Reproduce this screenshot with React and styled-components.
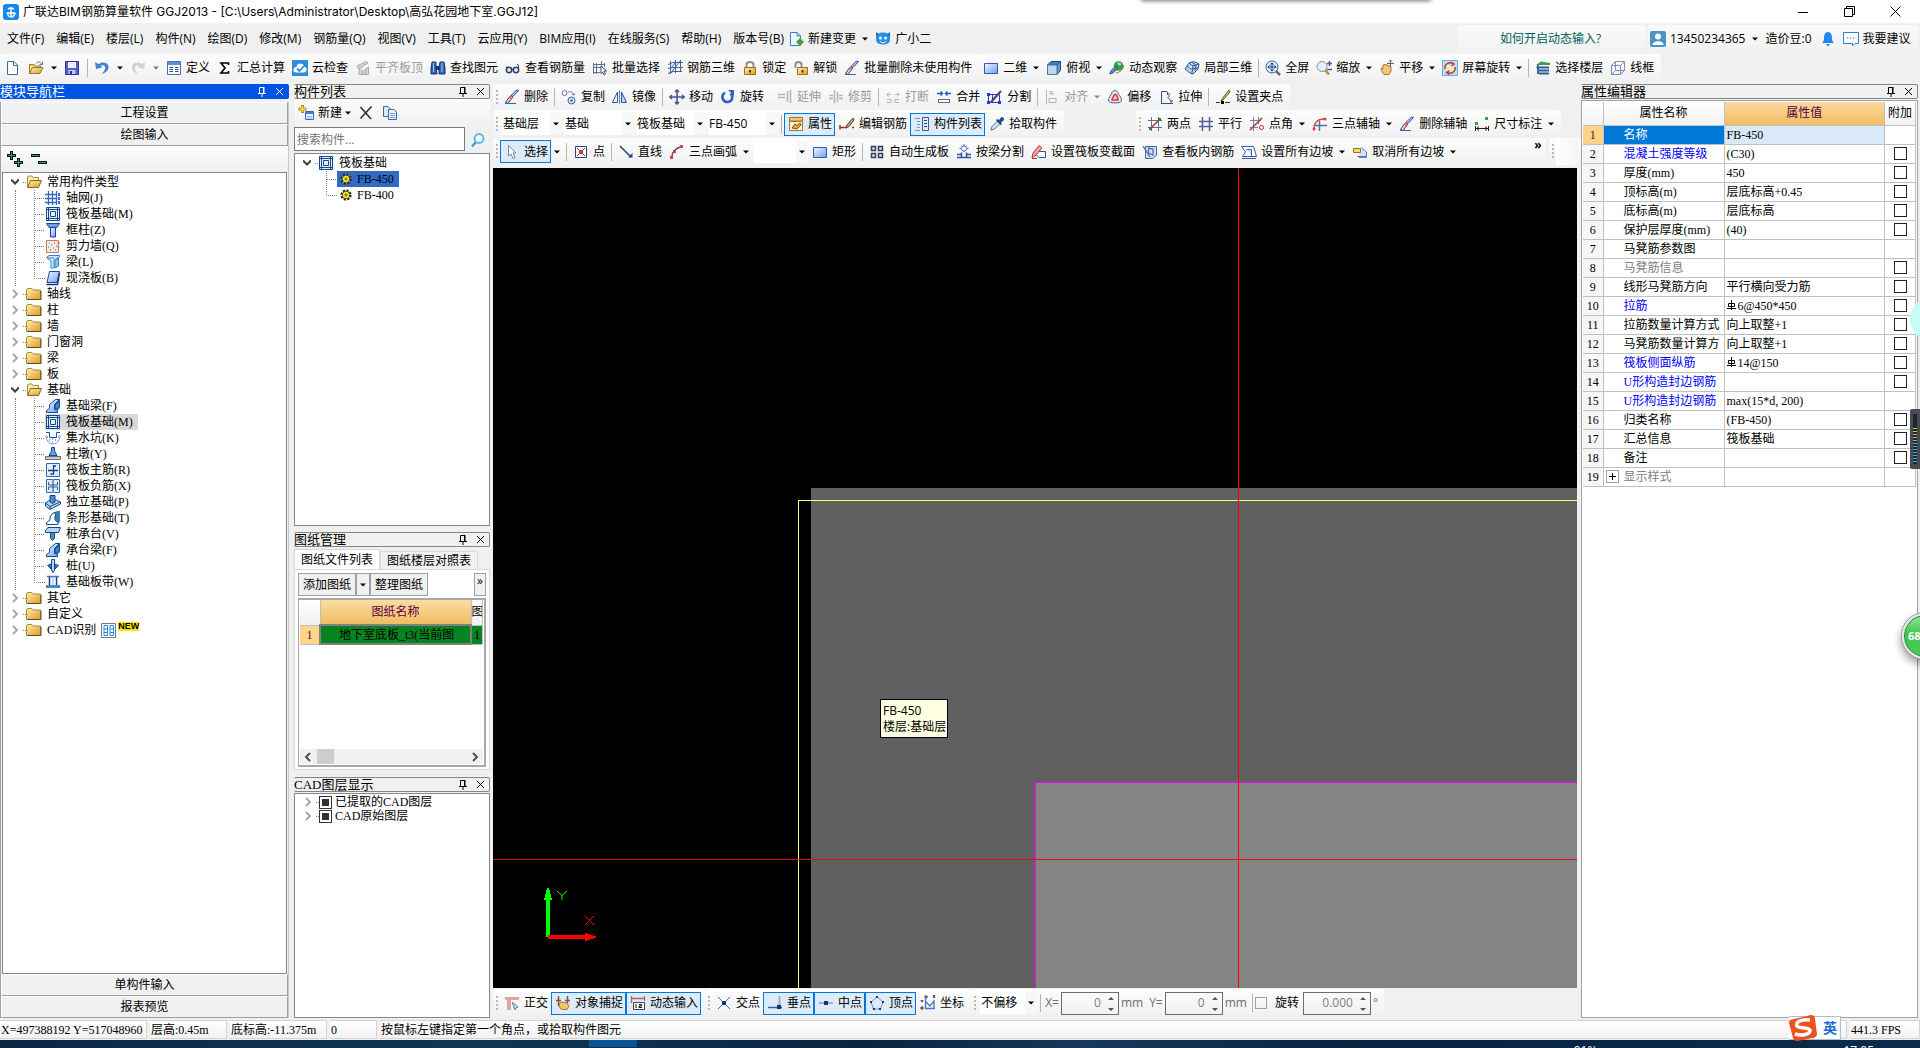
import React from "react";
import styled, { createGlobalStyle } from "styled-components";

const UI = `"Open Sans", "Noto Sans CJK SC", sans-serif`;
const SONG = `"Liberation Serif", "Noto Sans CJK SC", serif`;

const GlobalStyle = createGlobalStyle`
  * {
    box-sizing: border-box;
  }
  body {
    margin: 0;
    background: #f0f0f0;
    font: 12px/16px ${UI};
    color: #000;
    overflow: hidden;
  }
  button, input, select {
    font: inherit;
    color: inherit;
    margin: 0;
    padding: 0;
    border: 0;
    background: none;
    border-radius: 0;
    outline: 0;
  }
  svg {
    display: block;
    flex: none;
  }
`;

/* ---------- icons ---------- */

const P = ({ d, c = "#24479b", f = "none", w = 1 }) => (
  <path d={d} stroke={c} fill={f} strokeWidth={w} />
);

const brush = (
  <>
    <P d="M14.5 1.5L9 7.5L7 6.5L12.5 1z" c="#24479b" f="#b9d0f5" />
    <P d="M9 8L7 10.500L5 8.500L7 6.500z" c="#b03040" f="#e08a8a" />
    <P d="M5 8.500L1.500 13.500L4 14.500L7 10.500" c="#33415e" f="#cfd8ea" />
    <P d="M1 14.500H12" c="#4a5f95" />
  </>
);

const raft = (
  <>
    <rect x="1" y="1" width="14" height="14" fill="#e6f0fb" />
    <P d="M1.500 1.500H14.500V14.500H1.500zM5.500 5.500H10.500V10.500H5.500z" c="#12488f" />
    <P d="M3.500 1V15M12.500 1V15M1 3.500H15M1 12.500H15" c="#12488f" />
  </>
);

const beam = (
  <>
    <path d="M6 6L11 1H15V10L10 15V6z" fill="#3f7fc4" />
    <P d="M1.500 14.500V12.500L4.500 10.500V6.500L10.500 1.500H14.500L9.500 6.500V11L12.500 12.500V14.500z" c="#0c4a8c" f="url(#blue)" />
    <P d="M10 7L14.500 2.500V9L10 12z" c="#0c4a8c" f="#3c82cc" />
  </>
);

const ICONS = {
  logo: (
    <>
      <rect width="16" height="16" rx="3" fill="#1589e8" />
      <P d="M8 3V13M3.500 9H12.500M5 5.500C6 3.500 10 3.500 11 5.500M4.500 9C5 12 7 13 8 13C10 13 11.500 11 12 9" c="#fff" w="1.5" />
    </>
  ),
  newFile: <P d="M3.500 1.500H10L13.500 5V14.500H3.500zM9.500 1.500V5.500H13.500" c="#3f6c96" f="#fbfdff" />,
  open: (
    <>
      <P d="M1.500 13.500V4.500H6L7 6H12.500V8" c="#9a7a2c" f="#f6d77d" />
      <P d="M1.500 13.500L4.500 7.500H15L12 13.500z" c="#a07820" f="url(#gold)" />
      <P d="M8 3.500C10 1 12 1.500 13.500 4M14.500 1.500V4.500H11.500" c="#4a79bd" />
    </>
  ),
  save: (
    <>
      <P d="M1.500 1.500H14.500V14.500H1.500z" c="#31318c" f="#5660cf" />
      <path d="M4 2H12V8H4z" fill="#eef0ff" />
      <path d="M4.500 10H11.500V14H4.500z" fill="#c5c8e8" />
      <path d="M6 11H8V14H6z" fill="#31318c" />
    </>
  ),
  undo: <path d="M1 2L2 9L8.500 7.500L6.500 6C9 4 12 6 11 9C10.500 11 9 12 8 14C12 12.500 15 10 14.500 6.500C14 2.500 8.500 1 4.500 4z" fill="#4a7fd6" />,
  redo: <path d="M15 2L14 9L8 7.500L10 6C7 4.500 4.500 6 5 9C5.300 11 6.500 12 8 14C4 12.500 1.500 10 2 6.500C2.500 2.500 8 1 12 4z" fill="#d0d0d0" />,
  define: (
    <>
      <P d="M1.500 1.500H14.500V14.500H1.500z" c="#4f6fae" f="#f4f8ff" />
      <path d="M2 2H14V5H2z" fill="#5f8bd8" />
      <P d="M3.500 7.500H7M3.500 9.500H7M3.500 11.500H7M9 7.500H12.500M9 9.500H12.500M9 11.500H12.500" c="#35508a" />
    </>
  ),
  sum: <P d="M11.500 5V3H4L8 8L4 13H11.500V11" c="#000" w="1.600" />,
  cloudCheck: (
    <>
      <rect width="16" height="16" fill="#2d8fdc" />
      <path d="M4.500 12.500C0 12.500 1 7 4.500 7C5 2.500 11.500 2.500 12 6.500C15.500 7 15.500 12.500 11.500 12.500z" fill="#fff" />
      <P d="M5 8.500L7.500 11L12 6" c="#2d8fdc" w="1.800" />
    </>
  ),
  alignTop: <P d="M2 6L11 1.500L13 3L4 9zM4 9V14.500H13.500V7L9 10M7.500 14V11M10.500 14V10" c="#a9a9a9" f="#d2d2d2" />,
  find: (
    <>
      <path d="M2 2H6V7L7 14H1V8zM10 2H14L15 8V14H9V7z" fill="#2f65b0" stroke="#123a7c" />
      <path d="M6 6H10V10H6z" fill="#123a7c" />
      <P d="M3.500 3V12M12 3V12" c="#a6c8f2" />
    </>
  ),
  glasses: (
    <>
      <circle cx="4" cy="10" r="2.700" fill="#dfe9f5" stroke="#2f3f66" strokeWidth="1.500" />
      <circle cx="11" cy="10" r="2.700" fill="#dfe9f5" stroke="#2f3f66" strokeWidth="1.500" />
      <P d="M6.500 9.500H8.500M13.500 9V5L12 4M1.500 9V6.500" c="#2f3f66" />
    </>
  ),
  batch: (
    <>
      <P d="M1.500 3V14M4.500 3V14M1 4.500H12M1 7.500H9M1 12.500H8M9.500 1V9M12.500 3V7" c="#5f6f98" />
      <P d="M9 6L14.500 11H12L13.500 14L12 15L10.500 12L9 13.500z" c="#3d4660" f="#fff" />
    </>
  ),
  rebar3d: <P d="M3.500 1V14M8.500 0V13M13.500 0V12M1 4.500L6 2.500H16M1 8.500L6 7.500H16M1 13.500L6 11.500H15M3 14L13 1M3 9L8 3" c="#42619f" />,
  lock: (
    <>
      <P d="M4.500 8V4.500C4.500 1 11.500 1 11.500 4.500V8" c="#8f8f8f" w="2" />
      <P d="M2.500 7.500H13.500V14.500H2.500z" c="#a06f14" f="url(#gold)" />
      <P d="M8 10V12.500" c="#4d3200" w="2" />
    </>
  ),
  unlock: (
    <>
      <P d="M2.500 8V4.500C2.500 1 8.500 1 8.500 4.500V7" c="#8f8f8f" w="2" />
      <P d="M4.500 7.500H14.500V14.500H4.500z" c="#a06f14" f="url(#gold)" />
      <P d="M9.500 10V12.500" c="#4d3200" w="2" />
    </>
  ),
  brush,
  rect: <P d="M1.500 3.500H14.500V13.500H1.500z" c="#3057b5" f="url(#blue)" />,
  cube: (
    <>
      <P d="M1.500 5L5 1.500H14.500L11 5z" c="#25507e" f="#3f7fb5" />
      <P d="M11 5L14.500 1.500V10.500L11 14.500z" c="#25507e" f="#5f9dcb" />
      <P d="M1.500 5H11V14.500H1.500z" c="#4f7aa3" f="#b9d7ee" />
    </>
  ),
  orbit: (
    <>
      <circle cx="9.500" cy="6" r="4.800" fill="#2fa24a" />
      <path d="M8 3C10 1.500 13 3 12 5C10.500 6 8.500 5 8 3z" fill="#9fe3a5" />
      <P d="M1 14C1 11 5 7 8 6C9 9 5 13 1 14z" c="#23497e" f="#5d8dc8" />
      <P d="M7 13C11 12.500 14.500 9 14.500 5" c="#b55a2c" />
    </>
  ),
  local3d: <P d="M1 9L5 3L10 1.500L15 4L14 9L9 14L6 13zM5 3L9 6L15 4M9 6L8 13M3 6L7 9L14 8M7 2L12 5L11 11" c="#2d5c96" f="#b6d4ef" />,
  fit: (
    <>
      <P d="M11 11L15 15" c="#6a6a70" w="2.500" />
      <circle cx="7" cy="7" r="6" fill="#dcebfa" stroke="#3f5f94" />
      <P d="M7 3V11M3 7H11M5.500 4.500L7 3L8.500 4.500M5.500 9.500L7 11L8.500 9.500M4.500 5.500L3 7L4.500 8.500M9.500 5.500L11 7L9.500 8.500" c="#17357c" />
    </>
  ),
  zoom: (
    <>
      <P d="M9 10L13 14.500" c="#c08a3a" w="2.500" />
      <circle cx="6" cy="6.500" r="5" fill="#e6f0fa" stroke="#7d8fa8" />
      <P d="M13.500 1V6M11 3.500H16M11 9.500H16" c="#3c5d9a" w="1.500" />
    </>
  ),
  pan: (
    <>
      <P d="M3.500 13L2 8L4 8.500V5L6 4.500L8 5L10 6L12 7V11L10 14.500H5z" c="#a5762a" f="#f1c877" />
      <P d="M11.500 0V7M8 3.500H15M10 1.500L11.500 0L13 1.500" c="#54637e" />
    </>
  ),
  rotateScreen: (
    <>
      <P d="M.5.5H15.500V15.500H.5z" c="#5db0e6" f="#b9e2f7" />
      <path d="M5 6H11V11H5z" fill="#f2f0a8" />
      <P d="M3 9C2 4 7 1.500 11 3.500M13 7C14 12 9 14.500 5 12.500M9 2L12 4L9.500 6M7.500 10.500L4.500 12.500L7 14.500" c="#d6352c" w="1.500" />
    </>
  ),
  floors: (
    <>
      <path d="M1 5L6 1.500L15 3V5z" fill="#3c9d4d" />
      <P d="M3 5V14M1.500 7.500H14M4 10.500H14M4 13.500H14" c="#2c5b9c" w="1.800" />
    </>
  ),
  wire: <P d="M1.500 5.500H10.500V14.500H1.500zM1.500 5.500L5.500 1.500H14.500L10.500 5.500M14.500 1.500V10.500L10.500 14.500M5.500 1.500V10.500H14.500M5.500 10.500L1.500 14.500" c="#7890ba" />,
  copy: (
    <>
      <circle cx="3.500" cy="4" r="2.500" fill="#fff" stroke="#55719f" />
      <circle cx="10.500" cy="11.500" r="3.500" fill="#dce8f6" stroke="#3b5a92" />
      <circle cx="10.500" cy="11.500" r="1.200" fill="#3b5a92" />
      <P d="M7 3C10 2 12 3 12.500 6M10.500 4.500L12.500 6.500L14 4" c="#7d8aa6" />
    </>
  ),
  mirror: (
    <>
      <P d="M7.500 1V15" c="#6a7ca5" />
      <P d="M5.500 3V13.500H.5z" c="#2854a5" f="#fff" />
      <P d="M9.500 3V13.500H14.500z" c="#2854a5" f="#bcd5f5" />
    </>
  ),
  move: <P d="M8 1V15M1 8H15M6 3L8 1L10 3M6 13L8 15L10 13M3 6L1 8L3 10M13 6L15 8L13 10" c="#3e5b94" w="1.600" />,
  rotate: (
    <>
      <P d="M5 3.500C0 7 3 13.500 8 13C12.500 12.500 13.500 7 10.500 4.500" c="#2f63c0" w="2.600" />
      <path d="M8 1H14V7z" fill="#2f63c0" />
    </>
  ),
  extend: <P d="M1 5.500H8M1 8.500H8M10.500 2V13M13.500 1V14" c="#b4b4b4" w="1.500" />,
  trim: <P d="M6.500 1V14M9.500 3V13M1 6.500H5M1 9.500H5M11 6.500H15M11 9.500H15" c="#b4b4b4" w="1.500" />,
  breakIt: <P d="M2 5.500H6M10 5.500H14M3.500 3.500L2 5.500L3.500 7.500M12.500 3.500L14 5.500L12.500 7.500M2 10.500H6V13.500H2M14 10.500H10V13.500H14" c="#b4b4b4" />,
  join: (
    <>
      <P d="M1 4.500H6M15 4.500H10M4.500 2.500L6.500 4.500L4.500 6.500M11.500 2.500L9.500 4.500L11.500 6.500" c="#2c5cc0" w="1.500" />
      <P d="M2.500 10.500H13.500V13.500H2.500z" c="#54698f" f="#fff" />
    </>
  ),
  split: (
    <>
      <P d="M1.500 5.500H12.500V13.500H1.500zM5.500 5.500V13.500" c="#2238e0" />
      <P d="M4 13L14 2" c="#4d4740" w="2" />
      <path d="M0 4H3V7H0zM0 12H3V15H0zM11 12H14V15H11z" fill="#2238e0" />
    </>
  ),
  align: <P d="M2.500 1V15M5 4.500H10M5 2.500H8V6.500M5 9.500H12V13.500H5z" c="#b4b4b4" />,
  offset: (
    <>
      <P d="M1.500 12C1 8 5 6 5 3.500C6 1 10 1 11 3.500C11 6 15 8 14.500 12C13 14.500 3 14.500 1.500 12z" c="#465f8d" f="#e9eef6" />
      <P d="M5 11C5 9 6.500 8 7 6C8 5 9 5 9.500 6C10 8 11.500 9 11 11z" c="#cf3a3a" f="#f6caca" w="1.500" />
    </>
  ),
  stretch: <P d="M3.500 14.500V2.500H9M3 14.500H15M9.500 3V6M9.500 8L13 12M11 4V8M12 13H14V11" c="#2b5185" />,
  grip: (
    <>
      <P d="M14 1L7 10L6 12L8 11L15 3z" c="#6a5730" f="#d9b46a" />
      <P d="M1 13.500H5M10 13.500H15" c="#333" />
      <path d="M6 12H9V15H6z" />
    </>
  ),
  props: (
    <>
      <P d="M1.500 1.500H14.500V5H1.500z" c="#a8742a" f="#f8c477" />
      <P d="M1.500 5.500H14.500V14.500H1.500z" c="#a8742a" f="#fdf3dc" />
      <P d="M4 12L7 8L9 9.500L12 7L13 9L9 13z" c="#7b5410" f="#dca63c" />
    </>
  ),
  editRebar: (
    <>
      <P d="M14 2L8 9L7 12L10 10.500L15 4z" c="#3d3d3d" f="#cfa860" />
      <P d="M1 11.500H8M13 11.500H15M1 13.500V9" c="#93352b" w="1.500" />
    </>
  ),
  list: (
    <>
      <P d="M1 2.500H6M3 5.500H6M3 8.500H6M3 11.500H6M1 14.500H6" c="#7a8fb8" />
      <P d="M8.500 1.500H14.500V14.500H8.500z" c="#3d5d9a" f="#dce9f8" />
      <P d="M10 4.500H13M10 7.500H13M10 10.500H13" />
    </>
  ),
  picker: (
    <>
      <P d="M2 14L3 10.500L8.500 5L11 7.500L5.500 13z" c="#4d7199" f="#d5e7f7" />
      <path d="M8 3L10 4L12 1.500C14 .5 16 2.500 14.500 4.500L12 6.500L13 8L11.500 9L7 4.500z" fill="#1c4c86" />
    </>
  ),
  twoPoint: (
    <>
      <P d="M4.500 1V15M11.500 1V15M1 4.500H15M1 11.500H15" c="#5d6faf" />
      <P d="M3 13L13 3" c="#a02f20" w="1.500" />
      <path d="M2 11H5V14H2zM11 2H14V5H11z" fill="#2c7f35" />
    </>
  ),
  parallel: <P d="M4.500 1V15M11.500 1V15M1 5.500H15M1 10.500H15" c="#51609f" w="1.500" />,
  angle: (
    <>
      <P d="M4.500 1V15M1 4.500H12M1 11.500H9M9.500 1V8" c="#6f84bb" />
      <P d="M1 14L13 2" c="#b53026" w="1.500" />
      <circle cx="12.500" cy="11.500" r="2" fill="none" stroke="#c22" />
    </>
  ),
  threeAxis: (
    <>
      <P d="M7.500 5V15M2 9.500H15" c="#5a6da8" w="1.500" />
      <P d="M2 13C2 7 5 3 12 3" c="#d4453b" w="1.300" />
      <circle cx="13" cy="3" r="1.500" fill="#d4453b" />
      <circle cx="2" cy="13" r="1.500" fill="#d4453b" />
    </>
  ),
  dim: (
    <>
      <path d="M1 6H4V9H1zM11 1H14V4H11z" fill="#3ba148" />
      <P d="M1.500 10V15M14.500 10V15M2 12.500H14M5 10.500L2.500 12.500L5 14.500M11 10.500L13.500 12.500L11 14.500" c="#222" />
    </>
  ),
  cursor: <P d="M4.500 1.500V12L7 10L9 14.500L11 13.500L9 9H12z" c="#7b8798" f="#fff" />,
  point: (
    <>
      <P d="M2.500 2.500H13.500V13.500H2.500z" c="#2f3f7c" f="#fff" />
      <P d="M4 4L12 12M12 4L4 12" c="#47559a" />
      <path d="M6 6H10V10H6z" fill="#d0393a" />
    </>
  ),
  line: (
    <>
      <P d="M2 2L13 13" c="#24407f" w="1.500" />
      <path d="M10 13.500H14.500V9z" fill="#24407f" />
    </>
  ),
  arc: (
    <>
      <P d="M2.500 14C3 8 6 4 13 2.500" c="#3d5793" w="1.500" />
      <path d="M11 1H14V4H11zM4 6H7V9H4zM1 12H4V15H1z" fill="#cc4b35" />
    </>
  ),
  autoSlab: <P d="M2.500 2.500H6.500V6.500H2.500zM9.500 2.500H13.500V6.500H9.500zM2.500 9.500H6.500V13.500H2.500zM9.500 9.500H13.500V13.500H9.500z" c="#333c5c" f="#d6e2f5" w="1.500" />,
  beamSplit: (
    <>
      <P d="M5.500 8.500V13.500H10.500V8.500M1 13.500H15M1 10.500H5M11 10.500H15" c="#2c57a4" w="1.500" />
      <circle cx="8" cy="4.500" r="2.500" fill="#fff" stroke="#4470b5" />
      <P d="M8 0V2M8 7V8M3.500 4.500H5M11 4.500H12.500M5 1.500L6 2.500M11 1.500L10 2.500" c="#4470b5" />
    </>
  ),
  section: (
    <>
      <P d="M7 7.500H14.500V13.500H8L5 10.500" c="#2f4ca0" f="#fff" />
      <P d="M1 14L2 9L8 1.500L11 4L5 11z" c="#c03a35" f="#f0a09a" />
      <P d="M1 14.500H6" c="#c03a35" />
    </>
  ),
  viewRebar: (
    <>
      <P d="M3.500 2.500H14.500V11L11 14.500H3.500z" c="#47659d" f="#cfe1f4" />
      <P d="M1 2L8 13M6.500 4V9L11 11V5z" c="#5470a4" w="1.300" />
    </>
  ),
  slope: (
    <>
      <P d="M.5 2.500H12.500L15.500 12.500H1.500L4.500 8z" c="#3c5cb3" f="#fff" />
      <P d="M5.500 5.500H10.500V12" c="#3c5cb3" f="#cfe0f8" />
      <P d="M1 14.500H15" c="#3c5cb3" />
    </>
  ),
  unslope: (
    <>
      <P d="M9.500 3.500L14.500 8V13.500H7" c="#5f79bd" f="#cfe0f8" />
      <P d="M1.500 4.500H8.500V8.500H1.500z" c="#8d7a25" f="#f5df68" />
      <P d="M5 12.500H14" c="#5f79bd" />
    </>
  ),
  ortho: (
    <>
      <path d="M1 2H15V5H7V15H3V5H1z" fill="#dfa3a0" />
      <P d="M8 7L14 12L12 13L11 15z" c="#6e83a0" f="#c8d6e6" />
    </>
  ),
  snap: (
    <>
      <P d="M3.500 1V11M12.500 1V8M1 5.500H6M10 5.500H15" c="#8c4a4e" w="1.500" />
      <P d="M5 13L4 9L6 7L12 8L14 11L12 14.500H7z" c="#a67b2c" f="#efc56a" />
    </>
  ),
  dyn: (
    <>
      <P d="M1.500 1V8M14.500 1V6M2 3.500H14" c="#a9696c" w="1.300" />
      <P d="M3.500 7.500H14.500V14.500H3.500z" c="#3d4450" f="#fff" />
      <P d="M6 9V13M9 9.500H11.500V11H9V12.500H12" c="#111" />
    </>
  ),
  cross: (
    <>
      <P d="M2 2L14 14M14 2L2 14" c="#3c6db5" />
      <path d="M6 6H10V10H6z" fill="#12367c" />
    </>
  ),
  perp: (
    <>
      <P d="M12.500 1V12" c="#8fabd6" w="1.800" />
      <P d="M1 12.500H15" c="#2f63b0" w="1.500" />
      <path d="M10 10H14V14H10z" fill="#12367c" />
    </>
  ),
  mid: (
    <>
      <P d="M1 8H15" c="#8fabd6" w="1.800" />
      <path d="M6 6H10V10H6z" fill="#12367c" />
    </>
  ),
  vertex: (
    <>
      <P d="M8 2L14 7L11.500 14H4.500L2 7z" c="#6d95cf" />
      <path d="M7 1H9V3H7zM13 6H15V8H13zM1 6H3V8H1zM4 13H6V15H4zM10 13H12V15H10z" fill="#12367c" />
    </>
  ),
  coord: (
    <>
      <P d="M5.500 4V13.500H15M5 6L10 11L14 6V13" c="#3f78c7" w="1.300" />
      <P d="M1 5L2 7L3 5M13 0L15 3M15 0L13 3M1 12H3V14H1zM5 1H7V3H5z" c="#333" />
    </>
  ),
  change: (
    <>
      <P d="M2.500 1.500H9L12.500 5V14.500H2.500z" c="#3484c4" f="#eef7ff" />
      <P d="M9 1.500V5H12.500" c="#3484c4" />
      <path d="M12 7L16 11L12 15L8 11z" fill="#44a52c" />
    </>
  ),
  robot: (
    <>
      <path d="M1 6C1 0 15 0 15 6V9C15 15 1 15 1 9z" fill="#2492e0" />
      <path d="M4 3L1 1V6zM12 3L15 1V6z" fill="#1575c0" />
      <circle cx="5.500" cy="7" r="1.500" fill="#fff" />
      <circle cx="10.500" cy="7" r="1.500" fill="#fff" />
      <P d="M5 10C6 12.500 10 12.500 11 10" c="#fff" />
    </>
  ),
  user: (
    <>
      <rect width="16" height="16" rx="2" fill="#4a93c4" />
      <circle cx="8" cy="5.500" r="3" fill="#fff" />
      <path d="M2.500 14C2.500 9 13.500 9 13.500 14z" fill="#fff" />
    </>
  ),
  bell: <path d="M8 1C5 1 4 4 4 7C4 9.500 3 11 2 12H14C13 11 12 9.500 12 7C12 4 11 1 8 1zM6 13H10L8 15.500z" fill="#1e88f2" />,
  chat: (
    <>
      <P d="M.5 1.500H15.500V12.500H12L9.500 15V12.500H.5z" c="#2b7fd0" f="#fff" />
      <P d="M4 7H5.500M7 7H8.500M10 7H11.500" c="#2b7fd0" />
    </>
  ),
  addNew: (
    <>
      <P d="M7.500 6.500H15.500V14.500H7.500z" c="#3f66b8" f="#eaf2ff" />
      <path d="M8 7H15V9H8z" fill="#4a7be0" />
      <P d="M9 11.500H14M9 13H14" c="#9db6e4" />
      <P d="M4.500 0V8M.5 4H8.500" c="#a8881a" w="3" />
      <P d="M4.500 1V7M1.500 4H7.500" c="#ffe04a" w="1.500" />
    </>
  ),
  del: <P d="M2.500 2L13 14M13.500 1.500L2.500 13.500" c="#3a3a3a" w="1.800" />,
  dup: (
    <>
      <P d="M1.500 1.500H6L8.500 4V11.500H1.500z" c="#3c66ad" f="#dce9fb" />
      <P d="M6.500 4.500H12L14.500 7V14.500H6.500z" c="#3c66ad" f="#eef5ff" />
      <P d="M8 8.500H13M8 10.500H13M8 12.500H13" c="#7d9cd0" />
    </>
  ),
  search: (
    <>
      <P d="M6 10L2 14.500" c="#4a9bd0" w="2.500" />
      <circle cx="9" cy="6.500" r="4.500" fill="#eef8ff" stroke="#58b4ea" strokeWidth="1.800" />
    </>
  ),
  folder: (
    <>
      <P d="M.5 13.500V3.500L2 2.500H6L7.500 4H14.500V13.500z" c="#a98a45" f="url(#gold)" />
      <P d="M1 13.500H15V5" c="#5f4c20" />
    </>
  ),
  folderOpen: (
    <>
      <P d="M1.500 13V3L2.500 2H6L7 3.500H12.500V7" c="#a98a45" f="#fae9b0" />
      <P d="M1.500 13.500L4.500 6.500H15.500L12.500 13.500z" c="#8c6a1c" f="url(#gold)" />
    </>
  ),
  axis: (
    <>
      <P d="M3.500 1V15M7.500 1V15M11.500 1V15M0 4.500H12M0 8.500H12M0 12.500H12" c="#3667c4" w="1.300" />
      <path d="M13 3H15V6H13zM13 7H15V10H13zM13 11H15V14H13z" fill="#3667c4" />
    </>
  ),
  raft,
  column: (
    <>
      <P d="M1.500 1.500H14.500L12 5.500H4z" c="#1c4a9c" f="#6f9be6" />
      <P d="M5.500 5.500H10.500V15H5.500z" c="#1c3f9c" f="url(#blue)" />
    </>
  ),
  wall: (
    <>
      <P d="M1.500 2.500H13.500V14.500H1.500z" c="#c27a5a" f="#f1ece8" />
      <P d="M3 9H4M6 7H7M5 12H6M8 10H9M9 5H10M10 12H11M4 5H5M11 8H12" c="#666" />
      <P d="M12 5H15M12 9H15" c="#e08a3c" />
    </>
  ),
  frame: (
    <>
      <P d="M1.500 3.500L4 1.500H14.500V3L9 6V14H6V7z" c="#2c86cf" f="#cfe8fa" />
      <P d="M2 4H9M10 14V7L13.500 4V12z" c="#2c86cf" f="#8dc4ee" />
    </>
  ),
  slab: (
    <>
      <P d="M4.500 1.500H14.500L12 12.500H2z" c="#1c4a9c" f="url(#blue)" />
      <P d="M1.500 14.500H12.500L14.500 3" c="#12387c" w="1.500" />
    </>
  ),
  beam,
  pit: (
    <>
      <P d="M1 2.500H4.500V7.500H11.500V2.500H15" c="#1c56a4" />
      <P d="M1 5C1 9 3 14 8 14C13 14 15 9 15 5" c="#6f9bd6" />
      <P d="M4 10H5M7 12H8M10 10H11M7 9H8M2 7H3M13 7H14" c="#1c56a4" />
    </>
  ),
  pier: (
    <>
      <P d="M6.500 1.500H9.500V5L12 9.500H4L6.500 5z" c="#0f4a9c" f="#6fa0e4" />
      <P d="M.5 10.500H15.500V13.500H.5z" c="#6a6f78" f="#c8ccd2" />
    </>
  ),
  mainBar: (
    <>
      <P d="M1.500 1.500H14.500V14.500H1.500z" c="#3a62b0" f="#e4eefb" />
      <P d="M8.500 3V12H5.500M3 8.500H13M8.500 4H11" c="#0f4286" w="1.300" />
    </>
  ),
  negBar: (
    <>
      <P d="M1.500 1.500H14.500V14.500H1.500z" c="#3a62b0" f="#e4eefb" />
      <P d="M8 1V15" c="#8a93a8" w="2" />
      <P d="M3.500 4V7H12.500V4M3.500 12V9H12.500V12" c="#2b62ae" />
    </>
  ),
  isolated: (
    <>
      <P d="M.5 9L5 6H11L15.500 8V10L5 15.500L.5 12z" c="#0f4a8c" f="#b9d7f3" />
      <P d="M5 1.500H10V8L7.500 9.500L5 8z" c="#0f4a8c" f="#4b8bd0" />
      <P d="M.5 9L5 12.500L15 8M5 12.500V15" c="#0f4a8c" />
    </>
  ),
  strip: (
    <>
      <path d="M8 3L12 1H15V12L12 14z" fill="#3f7fb5" />
      <P d="M1.500 14.500V12.500L5 10V7L8 3H11L10 7V10L13 12.500V14.500z" c="#0c4a8c" f="#fff" />
    </>
  ),
  cap: (
    <>
      <P d="M.5 4.500L3 1.500H15.500L13.500 6.500H.5z" c="#0c4a8c" f="#b9d7f3" />
      <P d="M5.500 6.500H9.500V12L7.500 14.500L5.500 12z" c="#0c4a8c" f="#4b8bd0" />
    </>
  ),
  pile: (
    <>
      <P d="M6.500 1.500H9.500V12L8 14.500L6.500 12z" c="#0c4a8c" f="#b9d7f3" />
      <P d="M2.500 7.500L6 6V11zM13.500 7.500L10 6V11z" c="#0c4a8c" f="#4b8bd0" />
    </>
  ),
  band: (
    <>
      <P d="M2 2.500H14M1 13H15" c="#4779c5" w="1.500" />
      <P d="M4.500 3V13M11.500 3V13" c="#0f4286" w="1.500" />
      <P d="M8 3V13" c="#98a5bd" />
      <path d="M1 11H15V14H1z" fill="#4d80cc" />
    </>
  ),
  cadNew: (
    <>
      <P d="M.5 1.500H14.500V15.500H.5z" c="#6c7a8c" f="#fff" />
      <P d="M3 3.500H6.500V13.500H3zM9 3.500H12.500V13.500H9zM3 7H6M9 7H12M3 10.500H6M9 10.500H12" c="#2287e2" />
    </>
  ),
  gear: (
    <>
      <circle cx="8" cy="8" r="6" fill="#ffef30" stroke="#222" strokeDasharray="2.700 2" strokeWidth="3" />
      <circle cx="8" cy="8" r="5" fill="#ffef30" stroke="#222" />
      <circle cx="8" cy="8" r="1.500" fill="none" stroke="#333" />
    </>
  ),
  expandAll: (
    <>
      <P d="M4.500 0V9M0 4.500H9M11.500 7V16M7 11.500H16" c="#111" w="3" />
      <P d="M4.500 1V8M1 4.500H8M11.500 8V15M8 11.500H15" c="#1aa08c" />
    </>
  ),
  collapseAll: (
    <>
      <P d="M0 4.500H9M7 11.500H16" c="#111" w="3" />
      <P d="M1 4.500H8M8 11.500H15" c="#1aa08c" />
    </>
  ),
};

const Icon = ({ name, size = 16 }) => (
  <svg width={size} height={size} viewBox="0 0 16 16" aria-hidden="true">
    {ICONS[name]}
  </svg>
);

const Defs = () => (
  <svg width="0" height="0" style={{ position: "absolute" }} aria-hidden="true">
    <linearGradient id="gold" x1="0" y1="0" x2="1" y2="1">
      <stop offset="0" stopColor="#fff0b8" />
      <stop offset="1" stopColor="#dd9b22" />
    </linearGradient>
    <linearGradient id="blue" x1="0" y1="0" x2="1" y2="1">
      <stop offset="0" stopColor="#f2f7ff" />
      <stop offset="1" stopColor="#6f9df0" />
    </linearGradient>
  </svg>
);

const Down = ({ c = "#000" }) => (
  <svg width="12" height="16" viewBox="0 0 12 16" aria-hidden="true">
    <path d="M3 6.500H9L6 9.500z" fill={c} />
  </svg>
);

const Chevron = ({ open }) => (
  <svg width="8" height="16" viewBox="0 0 8 16" aria-hidden="true">
    {open ? (
      <P d="M0 5.500L4 9.500L8 5.500" c="#404040" w="2" />
    ) : (
      <P d="M2 4L6 8L2 12" c="#a6a6a6" w="1.800" />
    )}
  </svg>
);

/* ---------- shell ---------- */

const Page = styled.div`
  position: relative;
  display: flex;
  flex-direction: column;
  height: 100vh;
  overflow: hidden;
  white-space: nowrap;
`;

const TitleBar = styled.header`
  display: flex;
  align-items: center;
  height: 23px;
  flex: none;
  padding: 0 2px 0 3px;
  gap: 4px;
  background: #fff;
  h1 {
    flex: 1;
    margin: 0;
    font: 400 12px/16px Inter, "Noto Sans CJK SC", sans-serif;
  }
`;

const WindowButtons = styled.div`
  display: flex;
`;

const WindowButton = styled.button`
  width: 46px;
  height: 22px;
  display: grid;
  place-items: center;
`;

const MenuBar = styled.nav`
  display: flex;
  align-items: center;
  height: 31px;
  flex: none;
  padding: 0 2px 0 7px;
`;

const Menus = styled.div`
  display: flex;
  gap: 12px;
`;

const MenuPanel = styled.div`
  display: flex;
  align-items: center;
  justify-content: ${(p) => (p.$center ? "center" : "flex-start")};
  gap: 4px;
  width: ${(p) => p.$width}px;
  height: 28px;
  padding: 0 4px 0 2px;
  margin-left: ${(p) => (p.$push ? "auto" : "3px")};
  border-radius: 3px;
  background: linear-gradient(#fafafa, #f1f1f1);
`;

const HelpLink = styled.a`
  color: #006060;
  text-decoration: none;
`;

const Bars = styled.div`
  display: flex;
  height: ${(p) => p.$height || 28}px;
  flex: none;
`;

const Bar = styled.div`
  display: flex;
  align-items: center;
  padding-right: 4px;
  margin-left: ${(p) => p.$gap || 0}px;
  border-radius: 3px;
  background: linear-gradient(#fdfdfd, #f0f0f0);
`;

const Grip = styled.span`
  width: 2px;
  height: 15px;
  margin: 0 2px 0 3px;
  background: repeating-linear-gradient(#b8b8b8 0 2px, transparent 2px 4px);
`;

const Sep = styled.span`
  width: 1px;
  height: 18px;
  margin: 0 2px 0 3px;
  background: ${(p) => (p.$blank ? "transparent" : "#b4b4b4")};
`;

const ToolButton = styled.button`
  display: flex;
  align-items: center;
  gap: 4px;
  height: 23px;
  padding: 0 2px 0 3px;
  border: 1px solid ${(p) => (p.$on ? "#0078d7" : "transparent")};
  background: ${(p) => (p.$on ? "#dcebf7" : "transparent")};
  color: ${(p) => (p.$off ? "#9a9a9a" : "#000")};
`;

const IconButton = styled.button`
  display: grid;
  place-items: center;
  width: 24px;
  height: 24px;
`;

const Combo = styled.div`
  display: flex;
  align-items: center;
  width: ${(p) => p.$width}px;
  height: 22px;
  margin-left: 2px;
  padding-left: 1px;
  background: #fff;
  select {
    flex: 1;
    min-width: 0;
    appearance: none;
  }
  svg {
    height: 22px;
    background: #f7f7f7;
  }
`;

const Tool = ({ icon, label, on, off, down }) => (
  <>
    <ToolButton $on={on} $off={off} disabled={off}>
      <Icon name={icon} />
      {label}
    </ToolButton>
    {down && <Down c={off ? "#8a8a8a" : "#000"} />}
  </>
);

const Select = ({ value, width, label }) => (
  <Combo $width={width}>
    <select aria-label={label} defaultValue={value}>
      <option>{value}</option>
    </select>
    <Down />
  </Combo>
);

const Tools = ({ items }) =>
  items.map((it, i) =>
    it === "|" ? (
      <Sep key={i} />
    ) : it === " " ? (
      <Sep key={i} $blank />
    ) : (
      <Tool key={i} icon={it[0]} label={it[1]} {...it[2]} />
    )
  );

const Main = styled.main`
  display: grid;
  grid-template-columns: 291px 196px minmax(0, 1fr) 340px;
  column-gap: 3px;
  flex: 1;
  min-height: 0;
  padding: 2px 0 0;
`;

const Column = styled.section`
  display: flex;
  flex-direction: column;
  min-width: 0;
  min-height: 0;
`;

/* ---------- docked panels ---------- */

const Head = styled.div`
  display: flex;
  align-items: center;
  height: 15px;
  flex: none;
  padding-right: 4px;
  gap: 8px;
  border: 1px solid ${(p) => (p.$active ? "#0054e3" : "#858585")};
  border-left-width: 0;
  border-radius: 2px;
  background: ${(p) => (p.$active ? "#0054e3" : "#f0f0f0")};
  color: ${(p) => (p.$active ? "#fff" : "#000")};
  h2 {
    flex: 1;
    margin: 0;
    font: 13px/13px ${SONG};
  }
`;

const PanelHead = ({ title, active }) => (
  <Head $active={active}>
    <h2>{title}</h2>
    <button aria-label="自动隐藏">
      <svg width="10" height="11" viewBox="0 0 10 11">
        <path d="M2.500 7V1.500H6.500V7M6.500 1.500V7M1 7.500H9M5 8V11" stroke="currentColor" fill="none" />
        <path d="M6 1H7.500V7H6z" fill="currentColor" />
      </svg>
    </button>
    <button aria-label="关闭">
      <svg width="9" height="11" viewBox="0 0 9 11">
        <path d="M1 2L8 9M8 2L1 9" stroke="currentColor" />
      </svg>
    </button>
  </Head>
);

const NavColumn = styled(Column)`
  padding-right: 2px;
`;

const NavBody = styled.div`
  display: flex;
  flex-direction: column;
  flex: 1;
  min-height: 0;
  margin-top: 3px;
  border-left: 1px solid #a0a0a0;
  border-right: 1px solid #c8c8c8;
`;

const NavButton = styled.button`
  height: 22px;
  flex: none;
  border: 1px solid #fff;
  border-bottom-color: #a0a0a0;
  border-right-color: #a0a0a0;
  background: #f0f0f0;
  font-family: ${SONG};
`;

const Strip = styled.div`
  display: flex;
  align-items: center;
  height: ${(p) => p.$height}px;
  flex: none;
  padding: 0 2px;
  background: linear-gradient(#fcfcfc, #f0f0f0);
`;

const NewButton = styled.button`
  display: flex;
  align-items: center;
  gap: 4px;
  padding-left: 2px;
`;

const Box = styled.div`
  flex: ${(p) => p.$grow || 1} 1 0;
  min-height: 0;
  overflow: hidden;
  padding-top: 1px;
  border: 1px solid #828790;
  background: #fff;
  font-family: ${SONG};
`;

const NavBox = styled(Box)`
  margin: 0 1px;
`;

const List = styled.ul`
  list-style: none;
  margin: 0;
  padding: 0;
`;

const Node = styled.div`
  display: flex;
  align-items: center;
  height: 16px;
  padding-left: ${(p) => (p.$leaf ? 0 : 8)}px;
`;

const Tick = styled.span`
  width: 3px;
  margin-left: 4px;
  border-top: 1px dotted #808080;
`;

const Leaves = styled(List)`
  margin-left: 12px;
  padding-left: 18px;
  border-left: 1px dotted #808080;
`;

const Label = styled.span`
  display: flex;
  align-items: center;
  gap: 5px;
  height: 16px;
  padding-right: 5px;
  background: ${(p) => p.$bg || "transparent"};
`;

const NewTag = styled.b`
  align-self: flex-start;
  height: 9px;
  margin-left: -4px;
  background: #ffe600;
  font: bold 9px/9px "Liberation Sans", sans-serif;
`;

const Branch = ({ last }) => (
  <svg width="11" height="16" viewBox="0 0 11 16" aria-hidden="true">
    <path d={last ? "M.5 0V8.500H11" : "M.5 0V16M1 8.500H11"} stroke="#808080" fill="none" strokeDasharray="1 1" />
  </svg>
);

const SearchRow = styled.label`
  display: flex;
  height: 25px;
  flex: none;
  margin-bottom: 1px;
  input {
    width: 171px;
    height: 24px;
    padding: 0 2px;
    border: 1px solid #7a7a7a;
    background: #fff;
  }
  button {
    flex: 1;
    display: grid;
    place-items: center;
  }
`;

const Leaf = styled.div`
  display: flex;
  margin-left: 31px;
  span:last-child {
    padding-left: 3px;
  }
`;

/* ---------- drawings panel ---------- */

const Tabs = styled.div`
  display: flex;
  align-items: flex-end;
  height: 20px;
  flex: none;
  margin-top: 2px;
`;

const Tab = styled.button`
  height: ${(p) => (p.$on ? 20 : 18)}px;
  padding: 0 6px;
  border: 1px solid #d9d9d9;
  border-bottom: 0;
  background: ${(p) => (p.$on ? "#fff" : "#f0f0f0")};
  font-family: ${SONG};
`;

const Sheet = styled.div`
  display: flex;
  flex-direction: column;
  height: 201px;
  flex: none;
  margin-bottom: 7px;
  padding: 3px 3px 2px;
  border: 1px solid #d9d9d9;
  background: #fff;
`;

const SheetTools = styled.div`
  display: flex;
  height: 23px;
  margin-bottom: 2px;
`;

const SheetButton = styled.button`
  display: flex;
  justify-content: center;
  align-items: ${(p) => (p.$last ? "flex-start" : "center")};
  flex: none;
  height: 23px;
  padding: 0 ${(p) => (p.$thin ? 0 : 4)}px;
  border: 1px solid #a0a0a0;
  background: #f0f0f0;
  margin-left: ${(p) => (p.$last ? "auto" : 0)};
  min-width: 12px;
  line-height: 13px;
`;

const SheetGrid = styled.div`
  display: flex;
  flex-direction: column;
  flex: 1;
  overflow: hidden;
  border: 2px solid #a8a8a8;
  border-left-width: 1px;
  padding: 0 1px 1px;
`;

const SheetTable = styled.table`
  width: 183px;
  table-layout: fixed;
  border-collapse: collapse;
  font-family: ${SONG};
  th, td {
    padding: 0;
    overflow: hidden;
    font-weight: 400;
    text-align: center;
    border-right: 1px solid #c0c0c0;
    border-bottom: 1px solid #c0c0c0;
  }
  thead th {
    height: 25px;
    background: linear-gradient(#fff, #f0f0f0);
  }
  thead th:nth-child(2) {
    background: linear-gradient(#fbdca4, #efbd60);
    color: #590046;
  }
  tbody th {
    height: 19px;
    background: #ffd48a;
    color: #590046;
  }
  td {
    background: #078320;
  }
  td:nth-child(2) {
    border: 2px solid #808080;
    padding-left: 18px;
    text-align: left;
  }
`;

const ScrollBar = styled.div`
  display: flex;
  align-items: center;
  height: 15px;
  margin-top: auto;
  padding: 0 4px;
  background: #f0f0f0;
  svg:last-child {
    margin-left: auto;
  }
`;

const Thumb = styled.span`
  width: 17px;
  height: 15px;
  margin-left: 5px;
  background: #cdcdcd;
`;

const Layer = styled.label`
  display: flex;
  align-items: center;
  height: 14px;
  padding-left: 9px;
  line-height: 14px;
  input {
    appearance: none;
    width: 13px;
    height: 13px;
    margin-right: 3px;
    border: 1px solid #333;
    background: #333 content-box;
    padding: 2px;
  }
`;

/* ---------- canvas ---------- */

const Stack = styled(Column)``;

const Scene = styled.div`
  position: relative;
  flex: 1;
  min-height: 0;
  margin-top: 3px;
  overflow: hidden;
  background: #000;
`;

const Tip = styled.div`
  position: absolute;
  left: 387px;
  top: 531px;
  padding: 3px 1px 2px 2px;
  border: 1px solid #000;
  background: #ffffe1;
`;

const Drawing = () => (
  <svg width="100%" height="100%" shapeRendering="crispEdges">
    <rect x="318" y="320" width="100%" height="100%" fill="#606060" />
    <rect x="542" y="614" width="100%" height="100%" fill="#848484" />
    <path d="M305.500 900V332.500H3000" stroke="#ffff80" fill="none" />
    <path d="M542.500 1400V614.500H3000" stroke="#f0f" fill="none" />
    <path d="M0 691.500H3000" stroke="#e01010" />
    <path d="M745.500 0V1400" stroke="#f00" />
    <path d="M55 769V729" stroke="#0f0" strokeWidth="4" />
    <path d="M51 732L54 720H56L59 732z" fill="#0f0" />
    <path d="M55 769H95" stroke="#f00" strokeWidth="4" />
    <path d="M92 765V773L104 769z" fill="#f00" />
    <g shapeRendering="auto">
      <path d="M64 723L69 727.500V732M74 723L69 727.500" stroke="#0f0" fill="none" />
      <path d="M92 748L101 757M101 748L92 757" stroke="#f00" />
    </g>
  </svg>
);

const BottomBar = styled(Bars)`
  margin-top: 1px;
  margin-bottom: 1px;
`;

const Unit = styled.span`
  color: #6d6d6d;
  margin: 0 ${(p) => p.$gap || 2}px 0 2px;
`;

const Spin = styled.div`
  display: flex;
  align-items: center;
  width: ${(p) => p.$width}px;
  height: 23px;
  padding-right: 3px;
  border: 1px solid #6d6d6d;
  color: #808080;
  input {
    flex: 1;
    min-width: 0;
    text-align: right;
    padding-right: 6px;
  }
`;

const NumberBox = ({ value, width, label }) => (
  <Spin $width={width}>
    <input aria-label={label} defaultValue={value} disabled />
    <svg width="8" height="17" viewBox="0 0 8 17">
      <path d="M1 5H7L4 2zM1 13H7L4 16z" fill="#555" />
    </svg>
  </Spin>
);

const Turn = styled.label`
  display: flex;
  align-items: center;
  gap: 8px;
  margin-right: 4px;
  input {
    appearance: none;
    width: 12px;
    height: 12px;
    border: 1px solid #a0a0a0;
  }
`;

/* ---------- properties ---------- */

const PropColumn = styled(Column)`
  padding: 0 2px 0 1px;
`;

const PropBox = styled(Box)`
  margin-top: 1px;
  padding: 1px;
  border-color: #a0a0a8;
`;

const PropTable = styled.table`
  width: 100%;
  table-layout: fixed;
  border-collapse: collapse;
  line-height: 16px;
  th, td {
    padding: 0;
    overflow: hidden;
    font-weight: 400;
    border-right: 1px solid #c0c0c0;
    border-bottom: 1px solid #c0c0c0;
  }
  thead th {
    height: 23px;
    background: linear-gradient(#fff, #f2f2f2);
  }
  thead th:nth-child(3) {
    background: linear-gradient(#f9d9a0, #efbd60);
    color: #590046;
  }
  tbody th {
    height: 19px;
    background: #f6f6f6;
  }
  td {
    height: 19px;
  }
`;

const Name = styled.td`
  color: ${(p) => p.$color || "#000"};
  div {
    display: flex;
    align-items: center;
    height: 16px;
    padding-left: ${(p) => (p.$plus ? 2 : 20)}px;
    gap: 5px;
  }
`;

const Value = styled.td`
  div {
    display: flex;
    align-items: center;
    gap: 2px;
    height: 16px;
    padding-left: 2px;
  }
`;

const Check = styled.td`
  text-align: center;
  input {
    display: block;
    appearance: none;
    width: 13px;
    height: 13px;
    margin: 0 0 0 9px;
    border: 1px solid #222;
    background: #fff;
  }
`;

const Row = styled.tr`
  ${(p) =>
    p.$on &&
    `
    th { background: #ffd48a !important; color: #590046; }
    td:nth-child(2) { background: #0078d7; color: #fff; }
    td:nth-child(3) { background: #d9e9f7; }
  `}
`;

const Plus = styled.button`
  display: grid;
  place-items: center;
  width: 13px;
  height: 13px;
  border: 1px solid #a0a0a0;
`;

const BLUE = "#0000ff";
const GREY = "#808080";

// [name, value, has tick box, colour]
const props = [
  ["名称", "FB-450", false],
  ["混凝土强度等级", "(C30)", true, BLUE],
  ["厚度(mm)", "450", true],
  ["顶标高(m)", "层底标高+0.45", true],
  ["底标高(m)", "层底标高", true],
  ["保护层厚度(mm)", "(40)", true],
  ["马凳筋参数图", "", false],
  ["马凳筋信息", "", true, GREY],
  ["线形马凳筋方向", "平行横向受力筋", true],
  ["拉筋", "#6@450*450", true, BLUE],
  ["拉筋数量计算方式", "向上取整+1", true],
  ["马凳筋数量计算方", "向上取整+1", true],
  ["筏板侧面纵筋", "#14@150", true, BLUE],
  ["U形构造封边钢筋", "", true, BLUE],
  ["U形构造封边钢筋", "max(15*d, 200)", false, BLUE],
  ["归类名称", "(FB-450)", true],
  ["汇总信息", "筏板基础", true],
  ["备注", "", true],
  ["显示样式", "", false, GREY],
];

const RebarSign = () => (
  <svg width="9" height="11" viewBox="0 0 9 11" aria-label="三级钢">
    <path d="M4.500 0V10M1.500 3.500H7.500V6.500H1.500zM0 8.500H9" stroke="#000" fill="none" />
  </svg>
);

/* ---------- status ---------- */

const StatusBar = styled.footer`
  display: flex;
  gap: 3px;
  height: 22px;
  flex: none;
  padding: 2px 0 1px;
  font-family: ${SONG};
  line-height: 19px;
`;

const Cell = styled.div`
  width: ${(p) => (p.$width ? `${p.$width}px` : "auto")};
  flex: ${(p) => (p.$width ? "none" : 1)};
  padding-left: 1px;
  border: 1px solid #d4d4d4;
  border-left: 0;
  background: linear-gradient(#fefefe, #f2f2f2);
`;

const TaskBar = styled.div`
  display: flex;
  height: 8px;
  flex: none;
  overflow: hidden;
  padding: 3px 46px 0 589px;
  background: linear-gradient(90deg, #0a2744, #103555 25%, #082440 45%, #16385a 57%, #062340 70%, #0c2c4d);
  color: #fff;
  i {
    width: 48px;
    height: 8px;
    margin-top: -4px;
    background: #075394;
  }
  span {
    margin-left: auto;
  }
  span + span {
    margin-left: 246px;
  }
`;

const TopShade = styled.div`
  position: absolute;
  top: -4px;
  left: 1142px;
  width: 288px;
  height: 4px;
  box-shadow: 0 0 4px 1px #777;
`;

const Bubble = styled.div`
  position: absolute;
  top: 297px;
  right: -34px;
  width: 44px;
  height: 44px;
  border-radius: 50%;
  background: #c6fbf6;
`;

const Meter = styled.div`
  position: absolute;
  top: 409px;
  right: 0;
  width: 10px;
  height: 60px;
  border-radius: 2px 0 0 2px;
  background: #454c56;
  padding: 5px 3px;
  &::after {
    content: "";
    display: block;
    width: 4px;
    height: 50px;
    background:
      repeating-linear-gradient(#20252c 0 2px, transparent 2px 3px),
      linear-gradient(#20252c 25%, #e0c040 25% 45%, #43b3e0 60%);
  }
`;

const Ball = styled.div`
  position: absolute;
  top: 613px;
  right: -28px;
  width: 46px;
  height: 46px;
  padding-left: 4px;
  border: 2px solid #e8e8e8;
  border-radius: 50%;
  background: linear-gradient(#9be29a, #3fc550 45%, #48cc58);
  box-shadow: inset 0 0 0 1px #2c8048, 0 0 0 1px #9a9a9a, -1px 5px 8px #0006;
  color: #fff;
  font: bold 11px/42px "Open Sans", sans-serif;
`;

const Ime = styled.div`
  position: absolute;
  right: 79px;
  bottom: 8px;
  display: flex;
  align-items: center;
  width: 52px;
  height: 24px;
  border: 1px solid #a9bfd6;
  border-left: 0;
  background: #fff;
  color: #1a6fd0;
  font-size: 14px;
  font-weight: 700;
  gap: 6px;
`;

/* ---------- content ---------- */

const menus = [
  "文件(F)", "编辑(E)", "楼层(L)", "构件(N)", "绘图(D)", "修改(M)", "钢筋量(Q)",
  "视图(V)", "工具(T)", "云应用(Y)", "BIM应用(I)", "在线服务(S)", "帮助(H)", "版本号(B)",
];

const off = { off: true };
const on = { on: true };
const down = { down: true };

const topTools = [
  ["define", "定义"], ["sum", "汇总计算"], ["cloudCheck", "云检查"],
  ["alignTop", "平齐板顶", off], ["find", "查找图元"], ["glasses", "查看钢筋量"],
  ["batch", "批量选择"], ["rebar3d", "钢筋三维"], ["lock", "锁定"],
  ["unlock", "解锁"], ["brush", "批量删除未使用构件"],
];

const viewTools = [
  ["rect", "二维", down], ["cube", "俯视", down], ["orbit", "动态观察"],
  ["local3d", "局部三维"], "|", ["fit", "全屏"], ["zoom", "缩放", down],
  ["pan", "平移", down], ["rotateScreen", "屏幕旋转", down], "|",
  ["floors", "选择楼层"], ["wire", "线框"],
];

const editTools = [
  ["brush", "删除"], "|", ["copy", "复制"], ["mirror", "镜像"], "|",
  ["move", "移动"], ["rotate", "旋转"], " ", ["extend", "延伸", off],
  ["trim", "修剪", off], "|", ["breakIt", "打断", off], ["join", "合并"],
  ["split", "分割"], "|", ["align", "对齐", { off: true, down: true }],
  ["offset", "偏移"], ["stretch", "拉伸"], "|", ["grip", "设置夹点"],
];

const partTools = [
  "|", ["props", "属性", on], ["editRebar", "编辑钢筋"],
  ["list", "构件列表", on], ["picker", "拾取构件"],
];

const axisTools = [
  ["twoPoint", "两点"], ["parallel", "平行"], ["angle", "点角", down],
  ["threeAxis", "三点辅轴", down], ["brush", "删除辅轴"], ["dim", "尺寸标注", down],
];

const drawTools = [
  ["cursor", "选择", { on: true, down: true }], "|", ["point", "点"], "|",
  ["line", "直线"], ["arc", "三点画弧", down],
];

const slabTools = [
  ["rect", "矩形"], "|", ["autoSlab", "自动生成板"], ["beamSplit", "按梁分割"],
  ["section", "设置筏板变截面"], ["viewRebar", "查看板内钢筋"],
  ["slope", "设置所有边坡", down], ["unslope", "取消所有边坡", down],
];

const tree = [
  ["常用构件类型", [
    ["axis", "轴网(J)"], ["raft", "筏板基础(M)"], ["column", "框柱(Z)"],
    ["wall", "剪力墙(Q)"], ["frame", "梁(L)"], ["slab", "现浇板(B)"],
  ]],
  ["轴线"], ["柱"], ["墙"], ["门窗洞"], ["梁"], ["板"],
  ["基础", [
    ["beam", "基础梁(F)"], ["raft", "筏板基础(M)", true], ["pit", "集水坑(K)"],
    ["pier", "柱墩(Y)"], ["mainBar", "筏板主筋(R)"], ["negBar", "筏板负筋(X)"],
    ["isolated", "独立基础(P)"], ["strip", "条形基础(T)"], ["cap", "桩承台(V)"],
    ["beam", "承台梁(F)"], ["pile", "桩(U)"], ["band", "基础板带(W)"],
  ]],
  ["其它"], ["自定义"], ["CAD识别"],
];

const Overflow = styled.button`
  align-self: flex-start;
  margin-left: 75px;
  line-height: 14px;
  font-weight: 700;
`;

const Blank = styled.span`
  width: 22px;
  height: 26px;
  background: linear-gradient(90deg, #fff, #f4f4f4);
`;

function Navigator() {
  return (
    <NavColumn>
      <PanelHead title="模块导航栏" active />
      <NavBody>
        <NavButton>工程设置</NavButton>
        <NavButton>绘图输入</NavButton>
        <Strip $height={26}>
          <IconButton aria-label="全部展开"><Icon name="expandAll" /></IconButton>
          <IconButton aria-label="全部折叠"><Icon name="collapseAll" /></IconButton>
        </Strip>
        <NavBox>
          <List>
            {tree.map(([name, kids]) => (
              <li key={name}>
                <Node>
                  <Chevron open={!!kids} />
                  <Tick />
                  <Label>
                    <Icon name={kids ? "folderOpen" : "folder"} />
                    {name}
                    {name === "CAD识别" && (
                      <>
                        <Icon name="cadNew" />
                        <NewTag>NEW</NewTag>
                      </>
                    )}
                  </Label>
                </Node>
                {kids && (
                  <Leaves>
                    {kids.map(([icon, text, picked], i) => (
                      <li key={text}>
                        <Node $leaf>
                          <Branch last={i === kids.length - 1} />
                          <Label $bg={picked && "#d9d9d9"}>
                            <Icon name={icon} />
                            {text}
                          </Label>
                        </Node>
                      </li>
                    ))}
                  </Leaves>
                )}
              </li>
            ))}
          </List>
        </NavBox>
        <NavButton>单构件输入</NavButton>
        <NavButton>报表预览</NavButton>
      </NavBody>
    </NavColumn>
  );
}

function Components() {
  return (
    <>
      <PanelHead title="构件列表" />
      <Strip $height={28}>
        <NewButton>
          <Icon name="addNew" />
          新建
        </NewButton>
        <Down />
        <IconButton aria-label="删除"><Icon name="del" /></IconButton>
        <IconButton aria-label="复制"><Icon name="dup" /></IconButton>
      </Strip>
      <SearchRow>
        <input aria-label="搜索构件" placeholder="搜索构件..." />
        <button aria-label="搜索"><Icon name="search" /></button>
      </SearchRow>
      <Box $grow={375}>
        <Node>
          <Chevron open />
          <Tick />
          <Label>
            <Icon name="raft" />
            筏板基础
          </Label>
        </Node>
        <Leaf>
          <Branch />
          <Label $bg="#316ac5"><Icon name="gear" size={12} />FB-450</Label>
        </Leaf>
        <Leaf>
          <Branch last />
          <Label><Icon name="gear" size={12} />FB-400</Label>
        </Leaf>
      </Box>
    </>
  );
}

const Gap = styled.div`
  height: 6px;
  flex: none;
`;

function Drawings() {
  return (
    <>
      <PanelHead title="图纸管理" />
      <Tabs>
        <Tab $on>图纸文件列表</Tab>
        <Tab>图纸楼层对照表</Tab>
      </Tabs>
      <Sheet>
        <SheetTools>
          <SheetButton>添加图纸</SheetButton>
          <SheetButton $thin aria-label="更多添加方式"><Down /></SheetButton>
          <SheetButton>整理图纸</SheetButton>
          <SheetButton $last $thin>»</SheetButton>
        </SheetTools>
        <SheetGrid>
          <SheetTable>
            <colgroup>
              <col width="20" />
              <col width="151" />
              <col />
            </colgroup>
            <thead>
              <tr>
                <th />
                <th>图纸名称</th>
                <th>图</th>
              </tr>
            </thead>
            <tbody>
              <tr>
                <th>1</th>
                <td>地下室底板_t3(当前图</td>
                <td>1</td>
              </tr>
            </tbody>
          </SheetTable>
          <ScrollBar>
            <svg width="8" height="10" viewBox="0 0 8 10"><P d="M6 1L2 5L6 9" c="#505050" w="2" /></svg>
            <Thumb />
            <svg width="8" height="10" viewBox="0 0 8 10"><P d="M2 1L6 5L2 9" c="#505050" w="2" /></svg>
          </ScrollBar>
        </SheetGrid>
      </Sheet>
      <PanelHead title="CAD图层显示" />
    </>
  );
}

const LayerBox = styled(Box)`
  margin: 1px 0 0;
`;

function Properties() {
  return (
    <PropColumn>
      <PanelHead title="属性编辑器" />
      <PropBox>
        <PropTable>
          <colgroup>
            <col width="20" />
            <col width="121" />
            <col />
            <col width="31" />
          </colgroup>
          <thead>
            <tr>
              <th />
              <th>属性名称</th>
              <th>属性值</th>
              <th>附加</th>
            </tr>
          </thead>
          <tbody>
            {props.map(([name, value, tick, color], i) => (
              <Row key={i} $on={i === 0}>
                <th>{i + 1}</th>
                <Name $color={color} $plus={i === 18}>
                  <div>
                    {i === 18 && (
                      <Plus aria-label="展开">
                        <svg width="7" height="7"><P d="M3.500 0V7M0 3.500H7" c="#000" /></svg>
                      </Plus>
                    )}
                    {name}
                  </div>
                </Name>
                <Value>
                  <div>
                    {value[0] === "#" ? (
                      <>
                        <RebarSign />
                        {value.slice(1)}
                      </>
                    ) : (
                      value
                    )}
                  </div>
                </Value>
                <Check>{tick && <input type="checkbox" aria-label={`附加 ${name}`} />}</Check>
              </Row>
            ))}
          </tbody>
        </PropTable>
      </PropBox>
    </PropColumn>
  );
}

function Workspace() {
  return (
    <Stack>
      <Bars $height={26}>
        <Bar>
          <Grip />
          <Tools items={editTools} />
        </Bar>
      </Bars>
      <Bars $height={28}>
        <Bar>
          <Grip />
          <Select label="楼层" value="基础层" width={60} />
          <Select label="构件类别" value="基础" width={70} />
          <Select label="构件类型" value="筏板基础" width={70} />
          <Select label="构件" value="FB-450" width={70} />
          <Tools items={partTools} />
        </Bar>
        <Bar $gap={72}>
          <Grip />
          <Tools items={axisTools} />
        </Bar>
      </Bars>
      <Bars $height={27}>
        <Bar>
          <Grip />
          <Tools items={drawTools} />
          <Select label="画法" value="" width={54} />
          <Tools items={slabTools} />
          <Overflow>»</Overflow>
        </Bar>
        <Bar $gap={3}>
          <Grip />
          <Blank />
        </Bar>
      </Bars>
      <Scene>
        <Drawing />
        <Tip>
          FB-450
          <br />
          楼层:基础层
        </Tip>
      </Scene>
      <BottomBar>
        <Bar>
          <Grip />
          <Tools items={[["ortho", "正交"], ["snap", "对象捕捉", on], ["dyn", "动态输入", on]]} />
        </Bar>
        <Bar>
          <Grip />
          <Tools
            items={[["cross", "交点"], ["perp", "垂点", on], ["mid", "中点", on], ["vertex", "顶点", on], ["coord", "坐标"]]}
          />
        </Bar>
        <Bar>
          <Grip />
          <Select label="偏移方式" value="不偏移" width={57} />
          <Sep />
          <Unit>X=</Unit>
          <NumberBox label="X" value="0" width={58} />
          <Unit $gap={4}>mm</Unit>
          <Unit>Y=</Unit>
          <NumberBox label="Y" value="0" width={58} />
          <Unit>mm</Unit>
          <Sep />
          <Turn>
            <input type="checkbox" />
            旋转
          </Turn>
          <NumberBox label="旋转角度" value="0.000" width={68} />
          <Unit>°</Unit>
        </Bar>
      </BottomBar>
    </Stack>
  );
}

export default function App() {
  return (
    <Page>
      <GlobalStyle />
      <Defs />
      <TitleBar>
        <Icon name="logo" />
        <h1>广联达BIM钢筋算量软件 GGJ2013 - [C:\Users\Administrator\Desktop\高弘花园地下室.GGJ12]</h1>
        <WindowButtons>
          <WindowButton aria-label="最小化">
            <svg width="10" height="10"><path d="M0 5.500H10" stroke="#000" /></svg>
          </WindowButton>
          <WindowButton aria-label="还原">
            <svg width="11" height="11"><path d="M.5 2.500H8.500V10.500H.5zM2.500 2V.5H10.500V8.500H9" stroke="#000" fill="none" /></svg>
          </WindowButton>
          <WindowButton aria-label="关闭窗口">
            <svg width="11" height="11"><path d="M.5.5L10.500 10.500M10.500.5L.5 10.500" stroke="#000" /></svg>
          </WindowButton>
        </WindowButtons>
      </TitleBar>
      <MenuBar>
        <Menus>
          {menus.map((m) => (
            <button key={m}>{m}</button>
          ))}
        </Menus>
        <Tool icon="change" label="新建变更" down />
        <Tool icon="robot" label="广小二" />
        <MenuPanel $push $center $width={187}>
          <HelpLink href="#help">如何开启动态输入?</HelpLink>
        </MenuPanel>
        <MenuPanel $width={270}>
          <Icon name="user" />
          13450234365
          <Down />
          造价豆:0
          <Tool icon="bell" label="" />
          <Icon name="chat" />
          我要建议
        </MenuPanel>
      </MenuBar>
      <Bars>
        <Bar>
          <IconButton aria-label="新建工程"><Icon name="newFile" /></IconButton>
          <IconButton aria-label="打开"><Icon name="open" /></IconButton>
          <Down />
          <IconButton aria-label="保存"><Icon name="save" /></IconButton>
          <Sep />
          <IconButton aria-label="撤销"><Icon name="undo" /></IconButton>
          <Down />
          <IconButton aria-label="恢复"><Icon name="redo" /></IconButton>
          <Down c="#777" />
          <Tools items={topTools} />
        </Bar>
        <Bar>
          <Tools items={viewTools} />
        </Bar>
      </Bars>
      <Main>
        <Navigator />
        <Column>
          <Components />
          <Gap />
          <Drawings />
          <LayerBox $grow={225}>
            {["已提取的CAD图层", "CAD原始图层"].map((name) => (
              <Layer key={name}>
                <Chevron />
                <Tick />
                <input type="checkbox" />
                {name}
              </Layer>
            ))}
          </LayerBox>
        </Column>
        <Workspace />
        <Properties />
      </Main>
      <StatusBar>
        <Cell $width={147}>X=497388192 Y=517048960</Cell>
        <Cell $width={77}>层高:0.45m</Cell>
        <Cell $width={97}>底标高:-11.375m</Cell>
        <Cell $width={47}>0</Cell>
        <Cell>按鼠标左键指定第一个角点，或拾取构件图元</Cell>
        <Cell $width={70}>441.3 FPS</Cell>
      </StatusBar>
      <TaskBar>
        <i />
        <span>91%</span>
        <span>17:05</span>
      </TaskBar>
      <TopShade />
      <Bubble />
      <Meter />
      <Ball>68</Ball>
      <Ime>
        <svg width="28" height="28" viewBox="0 0 28 28">
          <path d="M1 6L22 1Q26 1 26 5L28 20Q28 23 24 24L8 27Q5 27 4 24L0 9Q0 7 1 6z" fill="#f0501e" />
          <path d="M21 6C12 5 6 8 8 12C10 15 22 13 21 17C20 21 12 22 6 20" stroke="#fff" strokeWidth="3.500" fill="none" />
        </svg>
        英
      </Ime>
    </Page>
  );
}
